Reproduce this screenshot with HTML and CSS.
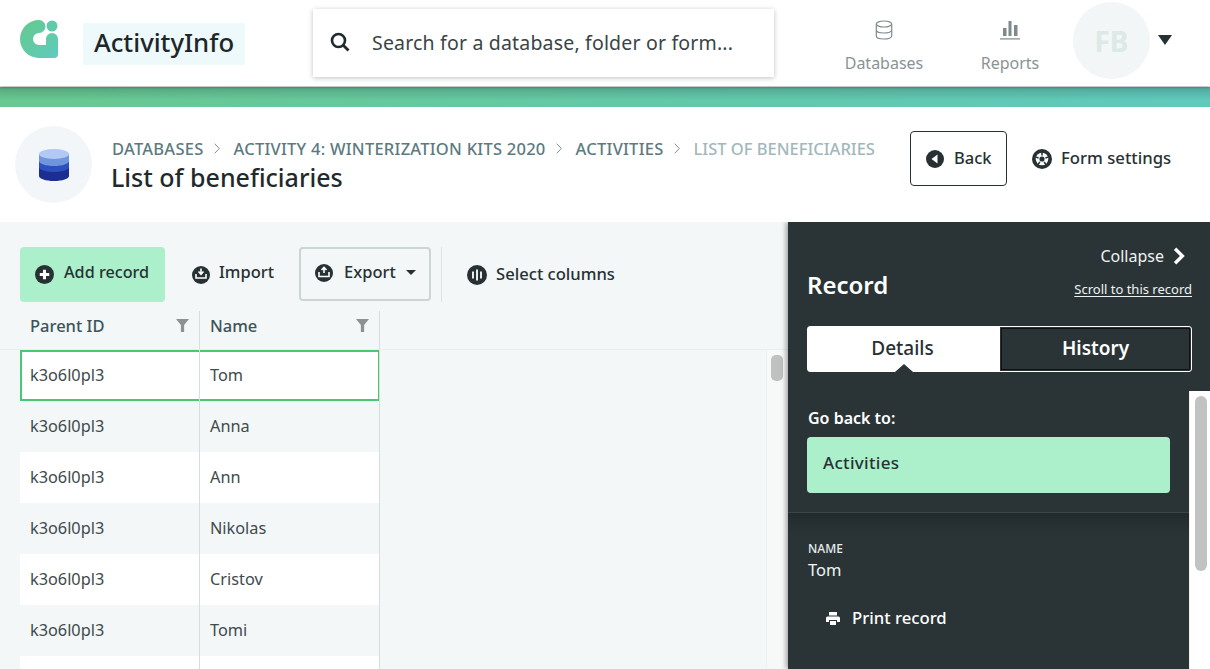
FILE: index.html
```html
<!DOCTYPE html>
<html lang="en">
<head>
<meta charset="utf-8">
<title>List of beneficiaries</title>
<link rel="stylesheet" href="styles.css">
</head>
<body>
<div class="app">
  <header class="topbar">
    <svg class="logo" viewBox="0 0 38 38" width="38" height="38">
      <defs><linearGradient id="lg" x1="0" y1="0" x2="1" y2="1"><stop offset="0" stop-color="#64c98c"/><stop offset="1" stop-color="#5fcbbe"/></linearGradient></defs>
      <path fill="url(#lg)" d="M19 0a6.500 6.500 0 0 1 0 13a6 6 0 0 0 0 12h7V19a6 6 0 0 1 12 0V34a4 4 0 0 1-4 4H19A19 19 0 0 1 19 0z"/>
      <circle fill="#5fcbab" cx="32" cy="6" r="5.500"/>
    </svg>
    <div class="brand">ActivityInfo</div>
    <div class="search">
      <svg viewBox="0 0 20 20" width="20" height="20"><circle cx="8.500" cy="8.500" r="6.500" fill="none" stroke="#1f2a2c" stroke-width="2.600"/><path d="M13 13l5.500 5.500" stroke="#1f2a2c" stroke-width="2.800"/></svg>
      <span>Search for a database, folder or form...</span>
    </div>
    <nav class="nav">
      <div class="nav-item nav-db">
        <svg viewBox="0 0 18 20" width="18" height="20" fill="none" stroke="#7f8a8b" stroke-width="1.200"><ellipse cx="9" cy="4" rx="7.700" ry="3"/><path d="M1.300 4v12c0 1.700 3.500 3 7.700 3s7.700-1.300 7.700-3V4M1.300 10c0 1.700 3.500 3 7.700 3s7.700-1.300 7.700-3"/></svg>
        <span>Databases</span>
      </div>
      <div class="nav-item nav-rep">
        <svg viewBox="0 0 20 20" width="20" height="20" fill="#7f8a8b"><rect x="3" y="8" width="3.500" height="8"/><rect x="8.500" y="1" width="3" height="15"/><rect x="14" y="5" width="3.500" height="11"/><rect y="18.300" width="20" height="1.200"/></svg>
        <span>Reports</span>
      </div>
    </nav>
    <div class="avatar">FB</div>
    <div class="caret-lg"></div>
  </header>
  <div class="band"></div>
  <section class="pagehead">
    <div class="dbcircle">
      <svg viewBox="0 0 30 34" width="30" height="34">
        <path fill="#1a2f8f" d="M0 19v9c0 2.700 6.700 5 15 5s15-2.300 15-5v-9z"/>
        <path fill="#2c50c0" d="M0 13v6c0 2.700 6.700 5 15 5s15-2.300 15-5v-6z"/>
        <path fill="#6f95dc" d="M0 6v7c0 2.700 6.700 5 15 5s15-2.300 15-5V6z"/>
        <ellipse fill="#b3c9f5" cx="15" cy="6" rx="15" ry="5"/>
      </svg>
    </div>
    <div class="titles">
      <div class="crumbs">
        <span>DATABASES</span><svg class="sep" viewBox="0 0 6 11" width="6" height="11"><path d="M.7.700L5.300 5.500.7 10.300" fill="none" stroke="#7b9094" stroke-width="1"/></svg>
        <span>ACTIVITY 4: WINTERIZATION KITS 2020</span><svg class="sep" viewBox="0 0 6 11" width="6" height="11"><path d="M.7.700L5.300 5.500.7 10.300" fill="none" stroke="#7b9094" stroke-width="1"/></svg>
        <span>ACTIVITIES</span><svg class="sep" viewBox="0 0 6 11" width="6" height="11"><path d="M.7.700L5.300 5.500.7 10.300" fill="none" stroke="#7b9094" stroke-width="1"/></svg>
        <span class="crumb-last">LIST OF BENEFICIARIES</span>
      </div>
      <h1>List of beneficiaries</h1>
    </div>
    <div class="backbtn">
      <svg viewBox="0 0 18 18" width="18" height="18"><circle cx="9" cy="9" r="9" fill="#273133"/><path d="M11.500 4.500v9L5.500 9z" fill="#fff"/></svg>
      <span>Back</span>
    </div>
    <div class="settings">
      <svg viewBox="0 0 20 20" width="20" height="20"><circle cx="10" cy="10" r="10" fill="#273133"/><circle cx="10" cy="10" r="6.300" fill="#fff"/><circle cx="10" cy="10" r="2.600" fill="#273133"/><path d="M10 3v3.500M3.300 7.900l3.300 1.100M5.900 15.700l2-2.800M14.100 15.700l-2-2.800M16.700 7.900l-3.300 1.100" stroke="#273133" stroke-width="1.500"/></svg>
      <span>Form settings</span>
    </div>
  </section>
  <main class="workspace">
    <section class="content">
      <div class="toolbar">
        <div class="tool tool-add">
          <svg viewBox="0 0 20 20" width="19" height="19"><circle cx="10" cy="10" r="10" fill="#273133"/><path d="M10 5v10M5 10h10" stroke="#fff" stroke-width="3.200"/></svg>
          <span>Add record</span>
        </div>
        <div class="tool tool-import">
          <svg viewBox="0 0 18 18" width="18" height="18"><circle cx="9" cy="9" r="9" fill="#273133"/><path d="M9 2.500v5M6.500 5.500L9 8.200l2.500-2.700M4 8v4h10V8" fill="none" stroke="#fff" stroke-width="1.600"/></svg>
          <span>Import</span>
        </div>
        <div class="tool tool-export">
          <svg viewBox="0 0 18 18" width="18" height="18"><circle cx="9" cy="9" r="9" fill="#273133"/><path d="M9 9V4M6.500 6L9 3.500 11.500 6M4 8v4.500h10V8" fill="none" stroke="#fff" stroke-width="1.600"/></svg>
          <span>Export</span>
          <i class="caret-sm"></i>
        </div>
        <div class="tool-divider"></div>
        <div class="tool tool-columns">
          <svg viewBox="0 0 20 20" width="20" height="20"><circle cx="10" cy="10" r="10" fill="#273133"/><path d="M6 6.500v7M10 4.500v11M14 6.500v7" stroke="#fff" stroke-width="1.800"/></svg>
          <span>Select columns</span>
        </div>
      </div>
      <div class="grid-area">
        <div class="grid-head">
          <div class="th"><span>Parent ID</span><svg viewBox="0 0 12 12" width="13" height="13"><path d="M0 0h12L7.500 5.500V12h-3V5.500z" fill="#8c9192"/></svg></div>
          <div class="th"><span>Name</span><svg viewBox="0 0 12 12" width="13" height="13"><path d="M0 0h12L7.500 5.500V12h-3V5.500z" fill="#8c9192"/></svg></div>
        </div>
        <div class="grid-body">
          <div class="rows">
            <div class="row row-selected"><div class="td">k3o6l0pl3</div><div class="td">Tom</div></div>
            <div class="row"><div class="td">k3o6l0pl3</div><div class="td">Anna</div></div>
            <div class="row row-white"><div class="td">k3o6l0pl3</div><div class="td">Ann</div></div>
            <div class="row"><div class="td">k3o6l0pl3</div><div class="td">Nikolas</div></div>
            <div class="row row-white"><div class="td">k3o6l0pl3</div><div class="td">Cristov</div></div>
            <div class="row"><div class="td">k3o6l0pl3</div><div class="td">Tomi</div></div>
            <div class="row row-white"><div class="td"></div><div class="td"></div></div>
          </div>
          <div class="vscroll"><div class="vthumb"></div></div>
        </div>
      </div>
    </section>
    <aside class="panel">
      <div class="panel-top">
        <div class="collapse-row">
          <span>Collapse</span>
          <svg viewBox="0 0 12 16" width="14" height="18"><path d="M2.500 1.500L9 8l-6.500 6.500" fill="none" stroke="#fff" stroke-width="3"/></svg>
        </div>
        <div class="record-row">
          <h2>Record</h2>
          <a class="scroll-link">Scroll to this record</a>
        </div>
        <div class="tabs">
          <div class="tab tab-on">Details</div>
          <div class="tab tab-off">History</div>
        </div>
      </div>
      <div class="panel-scroll">
        <div class="panel-body">
          <div class="goback">
            <div class="goback-label">Go back to:</div>
            <div class="goback-btn">Activities</div>
          </div>
          <div class="details">
            <div class="field-label">NAME</div>
            <div class="field-value">Tom</div>
            <div class="print">
              <svg viewBox="0 0 14 13" width="14" height="13" fill="#fff"><rect x="3" y="0" width="8" height="3.500"/><path d="M1.500 4.500h11A1.500 1.500 0 0 1 14 6v4h-3V8H3v2H0V6a1.500 1.500 0 0 1 1.500-1.500z"/><rect x="4" y="9" width="6" height="4"/></svg>
              <span>Print record</span>
            </div>
          </div>
        </div>
        <div class="panel-bar"><div class="panel-thumb"></div></div>
      </div>
    </aside>
  </main>
</div>
</body>
</html>
```

FILE: styles.css
```css
* { box-sizing: border-box; }
html, body { margin: 0; height: 100%; overflow: hidden; }
body { font-family: "Noto Sans", "Open Sans", sans-serif; color: #273133; background: #fff; }
.app { width: 1210px; height: 669px; display: flex; flex-direction: column; overflow: hidden; }

.topbar { height: 86px; flex: none; display: flex; align-items: flex-start; background: #fff; position: relative; z-index: 2; box-shadow: 0 1px 3px rgba(0,0,0,.35); }
.logo { margin: 20px 0 0 20px; flex: none; }
.brand { margin: 23px 0 0 25px; width: 162px; height: 42px; line-height: 39px; text-align: center; font-size: 25.700px; font-weight: 500; background: #edf9fa; color: #1d2729; }
.search { margin: 9px 0 0 68px; width: 461px; height: 68px; display: flex; align-items: center; padding: 0 0 2px 17px; gap: 22px; background: #fff; box-shadow: 0 1px 5px rgba(0,0,0,.25); font-size: 19.500px; letter-spacing: .18px; color: #3a4446; }
.nav { display: flex; margin-left: 70px; }
.nav-item { display: flex; flex-direction: column; align-items: center; font-size: 16px; color: #8a9394; }
.nav-item svg { margin-top: 20px; }
.nav-item span { margin-top: 11px; line-height: 24px; }
.nav-db { width: 80px; }
.nav-rep { width: 60px; margin-left: 56px; }
.avatar { margin: 2px 0 0 33px; width: 77px; height: 77px; border-radius: 50%; background: #f2f6f6; color: #dce9e4; font-size: 28px; font-weight: 700; display: flex; align-items: center; justify-content: center; }
.caret-lg { margin: 35px 0 0 8px; width: 0; height: 0; border-left: 7px solid transparent; border-right: 7px solid transparent; border-top: 10px solid #273133; }

.band { height: 20px; flex: none; margin-top: 1px; background: linear-gradient(rgba(30,50,50,.22), rgba(30,50,50,0) 65%), linear-gradient(90deg, #68c890, #5fc9bc); }

.pagehead { height: 115px; flex: none; display: flex; align-items: flex-start; background: #fff; position: relative; z-index: 1; }
.dbcircle { margin: 19px 0 0 15px; width: 77px; height: 77px; border-radius: 50%; background: #f3f6f8; display: flex; align-items: center; justify-content: center; flex: none; }
.titles { margin: 30px 0 0 20px; width: 798px; }
.crumbs { display: flex; align-items: center; font-size: 16.500px; letter-spacing: .25px; font-weight: 500; color: #5c7a7f; height: 22px; white-space: nowrap; }
.sep { margin: 0 14px 0 10px; flex: none; }
.crumb-last { color: #a1b8bb; letter-spacing: 0; }
h1 { margin: 2px 0 0 -1px; font-size: 25px; line-height: 32px; font-weight: 500; color: #1f2a2c; }
.backbtn { margin: 24px 0 0 0; width: 97px; height: 55px; border: 1px solid #273133; border-radius: 4px; display: flex; align-items: center; padding-left: 15px; gap: 10px; font-size: 16.500px; font-weight: 500; flex: none; }
.settings { margin: 24px 0 0 25px; height: 55px; display: flex; align-items: center; gap: 9px; font-size: 16.700px; font-weight: 500; white-space: nowrap; }
.backbtn span, .settings span { margin-bottom: 2px; }

.workspace { flex: 1; min-height: 0; display: flex; background: #f3f7f8; }
.content { width: 788px; flex: none; display: flex; flex-direction: column; padding-top: 25px; }
.toolbar { display: flex; align-items: flex-start; height: 56px; padding-left: 20px; font-size: 16.500px; font-weight: 500; color: #273133; }
.tool { display: flex; align-items: center; height: 55px; white-space: nowrap; }
.tool span { margin-bottom: 7px; }
.tool-add { width: 145px; background: #abf0cb; border-radius: 4px; padding-left: 15px; gap: 10px; margin-right: 27px; font-size: 16.200px; }
.tool-add span { margin-bottom: 5px; }
.tool-import { gap: 9px; margin-right: 25px; }
.tool-export { width: 132px; height: 54px; border: 2px solid #ccd4d5; border-radius: 4px; padding-left: 14px; gap: 11px; }
.tool-export span { margin-bottom: 5px; }
.tool-export svg { margin-bottom: 2px; }
.caret-sm { display: block; margin: 0 0 3px -1px; width: 0; height: 0; border-left: 5px solid transparent; border-right: 5px solid transparent; border-top: 5px solid #273133; }
.tool-divider { width: 1px; height: 55px; margin: 0 25px 0 10px; background: #dbe3e3; }
.tool-columns { gap: 9px; font-size: 16.600px; }
.tool-columns span { margin-bottom: 2px; }

.grid-area { flex: 1; min-height: 0; display: flex; flex-direction: column; margin-top: 8px; }
.grid-head { display: flex; height: 39px; flex: none; padding-left: 20px; border-bottom: 1px solid #e8eded; }
.th { width: 180px; display: flex; align-items: flex-start; justify-content: space-between; padding: 2px 10px 0 10px; font-size: 16.500px; font-weight: 500; color: #3b5459; border-right: 1px solid #d5dfdd; line-height: 26px; }
.th svg { margin-top: 6px; }
.grid-body { flex: 1; min-height: 0; display: flex; overflow: hidden; }
.rows { flex: 1; padding-left: 20px; }
.row { display: flex; height: 51px; width: 360px; }
.row-white { background: #fff; }
.row-selected { background: #fff; box-shadow: inset 0 0 0 2px #49c874; }
.td { width: 180px; padding-left: 10px; line-height: 51px; font-size: 16.300px; color: #3e4a4c; border-right: 1px solid #d5dfdd; }
.vscroll { width: 22px; flex: none; background: #f7f8f8; border-left: 1px solid #edf0f0; padding: 5px 4px 0 4px; }
.vthumb { width: 12px; height: 26px; border-radius: 5px; background: #bfc1c1; }

.panel { flex: 1; min-width: 0; display: flex; flex-direction: column; background: #2a3436; color: #fff; position: relative; box-shadow: -2px 0 5px rgba(0,0,0,.35); }
.panel-top { height: 169px; flex: none; padding: 21px 18px 0 19px; }
.collapse-row { display: flex; align-items: center; justify-content: flex-end; gap: 8px; height: 26px; padding-right: 6px; font-size: 16px; color: #eef2f2; }
.record-row { display: flex; justify-content: space-between; align-items: flex-start; height: 42px; margin-top: -1px; }
h2 { margin: 0; font-size: 24px; line-height: 34px; font-weight: 600; }
.scroll-link { font-size: 13px; line-height: 16px; margin-top: 13px; color: #eef2f2; text-decoration: underline; text-underline-offset: 2px; }
.tabs { display: flex; height: 46px; margin-top: 16px; border: 1px solid #fff; border-radius: 3px; position: relative; }
.tab { display: flex; align-items: center; justify-content: center; padding-bottom: 2px; font-size: 19px; font-weight: 500; }
.tab-on { width: 192px; background: #fff; color: #273133; position: relative; padding-right: 3px; }
.tab-on::after { content: ""; position: absolute; left: 87px; bottom: -1px; width: 0; height: 0; border-left: 9px solid transparent; border-right: 9px solid transparent; border-bottom: 8px solid #2a3436; }
.tab-off { flex: 1; background: #2a3436; color: #fff; font-weight: 600; margin: 1px; border: 1px solid #111; }

.panel-scroll { flex: 1; min-height: 0; display: flex; }
.panel-body { flex: 1; min-width: 0; }
.goback { height: 122px; padding: 15px 19px 0 19px; background: #2a3436; border-bottom: 1px solid #3a4749; }
.goback-label { font-size: 16px; font-weight: 600; line-height: 24px; margin-left: 1px; }
.goback-btn { margin-top: 7px; height: 56px; border-radius: 4px; background: #abf0cb; color: #273133; font-size: 17px; letter-spacing: .3px; font-weight: 500; padding: 13px 16px; line-height: 26px; }
.details { padding: 28px 20px 0; background: linear-gradient(#212a2c, #2a3436 20px); height: 200px; }
.field-label { font-size: 12px; font-weight: 500; line-height: 16px; color: #e8eded; }
.field-value { font-size: 16.500px; line-height: 24px; margin-top: 1px; color: #f2f5f5; }
.print { display: flex; align-items: center; gap: 12px; margin: 24px 0 0 18px; font-size: 16.700px; font-weight: 500; line-height: 24px; }
.panel-bar { width: 21px; flex: none; background: #fff; border-left: 1px solid #eee; padding: 5px 3px 0 5px; }
.panel-thumb { width: 12px; height: 175px; border-radius: 6px; background: #c1c3c3; }
```
